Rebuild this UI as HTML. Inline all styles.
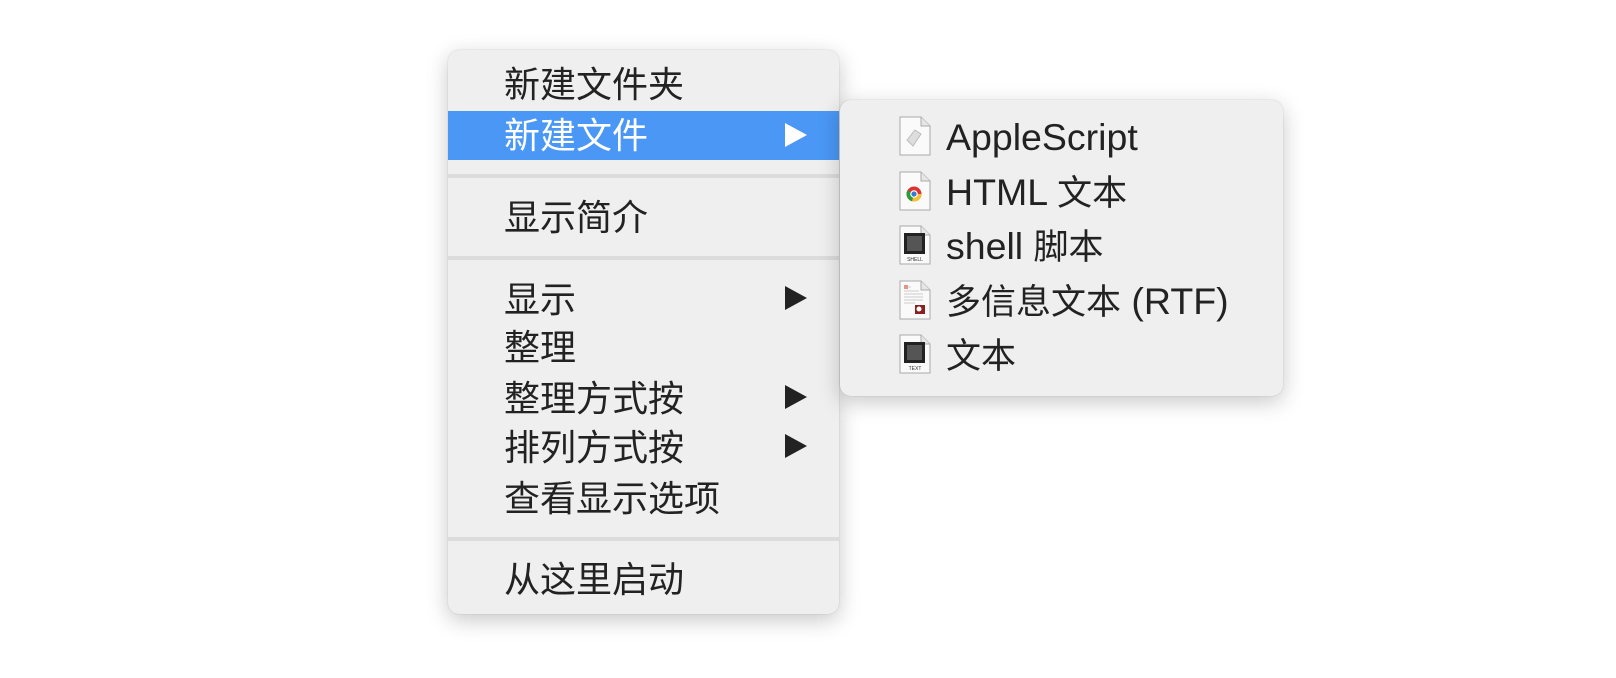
<!DOCTYPE html>
<html><head><meta charset="utf-8"><style>
html,body{margin:0;padding:0;background:#fff;width:1616px;height:678px;overflow:hidden}
body{position:relative;font-family:"Liberation Sans","Noto Sans CJK SC",sans-serif;color:#222}
.menu{position:absolute;background:#efeff0;border-radius:11px;box-shadow:0 6px 22px rgba(0,0,0,.22),0 0 1px rgba(0,0,0,.25)}
#m1{left:448px;top:50px;width:391px;height:564px}
#m2{left:840px;top:100px;width:443px;height:296px}
.it{position:absolute;left:56px;font-size:36px;line-height:40px;white-space:nowrap;font-family:"Liberation Sans","Noto Sans CJK SC",sans-serif}
.hl{position:absolute;left:0;right:0;top:61px;height:49px;background:#4a97f5}
.sep{position:absolute;left:0;right:0;height:4px;background:#dcdcdd}
.ar{position:absolute;left:337px;width:0;height:0;border-left:22px solid #222;border-top:12px solid transparent;border-bottom:12px solid transparent}
.si{position:absolute;left:106px;font-size:37.5px;line-height:40px;white-space:nowrap}
.c{font-size:35px}
.ic{position:absolute;left:59px}
</style></head><body>
<div class="menu" id="m1">
 <div class="hl"></div>
 <div class="it" style="top:15px">新建文件夹</div>
 <div class="it" style="top:66px;color:#fff">新建文件</div>
 <div class="ar" style="top:73px;border-left-color:#fff"></div>
 <div class="sep" style="top:124px"></div>
 <div class="it" style="top:148px">显示简介</div>
 <div class="sep" style="top:206px"></div>
 <div class="it" style="top:230px">显示</div>
 <div class="ar" style="top:236px"></div>
 <div class="it" style="top:278px">整理</div>
 <div class="it" style="top:329px">整理方式按</div>
 <div class="ar" style="top:335px"></div>
 <div class="it" style="top:378px">排列方式按</div>
 <div class="ar" style="top:384px"></div>
 <div class="it" style="top:429px">查看显示选项</div>
 <div class="sep" style="top:487px"></div>
 <div class="it" style="top:510px">从这里启动</div>
</div>
<div class="menu" id="m2">
 <svg class="ic" style="top:16px" width="32" height="40" viewBox="0 0 32 40"><path d="M1 1H22L31 10V39H1Z" fill="#fafafa" stroke="#aaa"/><path d="M22 1V10H31" fill="#e6e6e6" stroke="#aaa"/><path d="M8 24L16 14L22 18L14 30Z" fill="#ddd" stroke="#bbb"/></svg>
 <div class="si" style="top:17px">AppleScript</div>
 <svg class="ic" style="top:71px" width="32" height="40" viewBox="0 0 32 40"><path d="M1 1H22L31 10V39H1Z" fill="#fafafa" stroke="#aaa"/><path d="M22 1V10H31" fill="#e6e6e6" stroke="#aaa"/><circle cx="15" cy="23" r="7.5" fill="#d33"/><path d="M15 23L8.5 19.3A7.5 7.5 0 0 0 13 30.2Z" fill="#2a9a3a"/><path d="M15 23L13 30.2A7.5 7.5 0 0 0 22.5 23Z" fill="#f2c230"/><circle cx="15" cy="23" r="3.2" fill="#3a78d8" stroke="#fff" stroke-width="1.2"/></svg>
 <div class="si" style="top:72px">HTML <span class="c">文本</span></div>
 <svg class="ic" style="top:125px" width="32" height="40" viewBox="0 0 32 40"><path d="M1 1H22L31 10V39H1Z" fill="#fafafa" stroke="#aaa"/><path d="M22 1V10H31" fill="#e6e6e6" stroke="#aaa"/><rect x="5" y="8" width="21" height="21" fill="#222"/><rect x="8" y="11" width="15" height="15" fill="#555"/><text x="16" y="36" font-size="5" text-anchor="middle" fill="#333" font-family="Liberation Sans">SHELL</text></svg>
 <div class="si" style="top:126px">shell <span class="c">脚本</span></div>
 <svg class="ic" style="top:180px" width="32" height="40" viewBox="0 0 32 40"><path d="M1 1H22L31 10V39H1Z" fill="#fafafa" stroke="#aaa"/><path d="M22 1V10H31" fill="#e6e6e6" stroke="#aaa"/><path d="M5 7H12M5 11H20M5 14H24M5 17H24M5 20H24M5 23H16" stroke="#ccc"/><rect x="5" y="5" width="4" height="4" fill="#d98"/><rect x="16" y="25" width="10" height="9" fill="#822"/><circle cx="20" cy="29" r="2.5" fill="#fff"/></svg>
 <div class="si" style="top:181px"><span class="c">多信息文本</span> (RTF)</div>
 <svg class="ic" style="top:234px" width="32" height="40" viewBox="0 0 32 40"><path d="M1 1H22L31 10V39H1Z" fill="#fafafa" stroke="#aaa"/><path d="M22 1V10H31" fill="#e6e6e6" stroke="#aaa"/><rect x="5" y="8" width="21" height="21" fill="#222"/><rect x="8" y="11" width="15" height="15" fill="#555"/><text x="16" y="36" font-size="5" text-anchor="middle" fill="#333" font-family="Liberation Sans">TEXT</text></svg>
 <div class="si" style="top:235px"><span class="c">文本</span></div>
</div>
</body></html>
